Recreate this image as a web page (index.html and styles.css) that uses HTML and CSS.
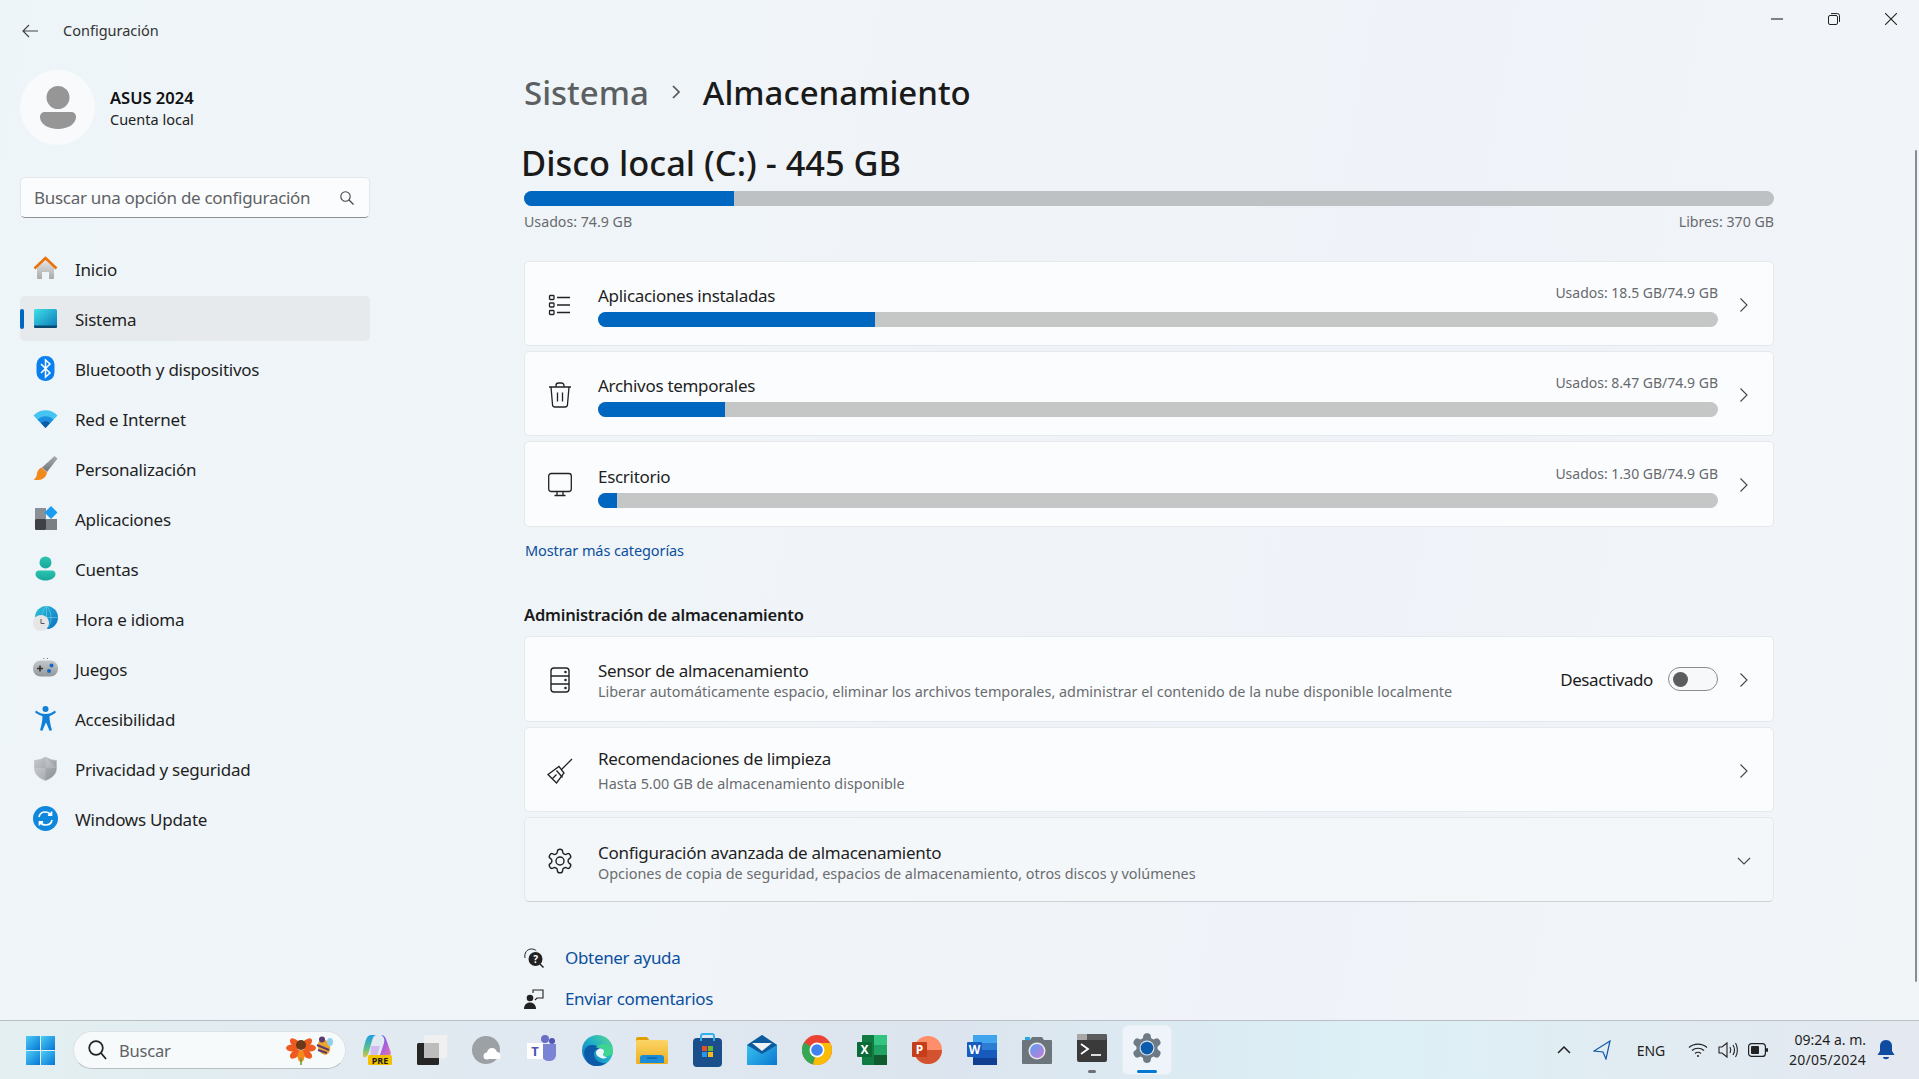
FILE: index.html
```html
<!DOCTYPE html>
<html lang="es">
<head>
<meta charset="UTF-8">
<title>Configuración</title>
<link rel="stylesheet" href="styles.css">
</head>
<body>
<svg class="defs" width="0" height="0">
	<defs>
		<linearGradient id="gHome" x1="0" y1="0" x2="0" y2="1"><stop offset="0" stop-color="#e6e6e6"/><stop offset="1" stop-color="#a9a9a9"/></linearGradient>
		<linearGradient id="gScreen" x1="0" y1="0" x2="1" y2="1"><stop offset="0" stop-color="#3fe0e6"/><stop offset="1" stop-color="#0a78b8"/></linearGradient>
		<linearGradient id="gTeal" x1="0" y1="0" x2="0" y2="1"><stop offset="0" stop-color="#2bc4ae"/><stop offset="1" stop-color="#17a89c"/></linearGradient>
		<linearGradient id="gGlobe" x1="0" y1="0" x2="1" y2="1"><stop offset="0" stop-color="#2fc4d8"/><stop offset="1" stop-color="#0a6ec4"/></linearGradient>
		<linearGradient id="gShield" x1="0" y1="0" x2="1" y2="1"><stop offset="0" stop-color="#c9ccd0"/><stop offset="1" stop-color="#888d92"/></linearGradient>
		<linearGradient id="gPad" x1="0" y1="0" x2="0" y2="1"><stop offset="0" stop-color="#c4c7ca"/><stop offset="1" stop-color="#94989c"/></linearGradient>
		<linearGradient id="gBrush" x1="0" y1="0" x2="0" y2="1"><stop offset="0" stop-color="#a8acb0"/><stop offset="1" stop-color="#70757a"/></linearGradient>
		<linearGradient id="gStart" x1="0" y1="0" x2="1" y2="1"><stop offset="0" stop-color="#4ccdf7"/><stop offset="1" stop-color="#0674d4"/></linearGradient>
		<linearGradient id="gCopL" x1="0" y1="0" x2="0" y2="1"><stop offset="0" stop-color="#1f9de8"/><stop offset=".6" stop-color="#5dc08a"/><stop offset="1" stop-color="#e3c53a"/></linearGradient>
		<linearGradient id="gCopR" x1="0" y1="0" x2="1" y2="1"><stop offset="0" stop-color="#2a6de0"/><stop offset=".55" stop-color="#a65fdc"/><stop offset="1" stop-color="#ee7ab0"/></linearGradient>
		<linearGradient id="gEdge" x1="1" y1="0" x2="0" y2="1"><stop offset="0" stop-color="#5fdc8a"/><stop offset=".45" stop-color="#1fb0c8"/><stop offset="1" stop-color="#0c6cc0"/></linearGradient>
		<linearGradient id="gFolder" x1="0" y1="0" x2="0" y2="1"><stop offset="0" stop-color="#fbd568"/><stop offset="1" stop-color="#efae1c"/></linearGradient>
		<linearGradient id="gMail" x1="0" y1="0" x2="1" y2="1"><stop offset="0" stop-color="#3fd0f8"/><stop offset="1" stop-color="#0b77d0"/></linearGradient>
		<linearGradient id="gCam" x1="0" y1="0" x2="1" y2="1"><stop offset="0" stop-color="#5aa0f0"/><stop offset="1" stop-color="#c878d8"/></linearGradient>
		<path id="cog" d="M12.22 2h-.44a2 2 0 0 0-2 2v.18a2 2 0 0 1-1 1.73l-.43.25a2 2 0 0 1-2 0l-.15-.08a2 2 0 0 0-2.73.73l-.22.38a2 2 0 0 0 .73 2.73l.15.1a2 2 0 0 1 1 1.72v.51a2 2 0 0 1-1 1.74l-.15.09a2 2 0 0 0-.73 2.73l.22.38a2 2 0 0 0 2.73.73l.15-.08a2 2 0 0 1 2 0l.43.25a2 2 0 0 1 1 1.73V20a2 2 0 0 0 2 2h.44a2 2 0 0 0 2-2v-.18a2 2 0 0 1 1-1.73l.43-.25a2 2 0 0 1 2 0l.15.08a2 2 0 0 0 2.73-.73l.22-.39a2 2 0 0 0-.73-2.73l-.15-.08a2 2 0 0 1-1-1.74v-.5a2 2 0 0 1 1-1.74l.15-.09a2 2 0 0 0 .73-2.73l-.22-.38a2 2 0 0 0-2.73-.73l-.15.08a2 2 0 0 1-2 0l-.43-.25a2 2 0 0 1-1-1.73V4a2 2 0 0 0-2-2z"/>
		<path id="chev" d="M1.500 .5L8 7l-6.500 6.500"/>
	</defs>
</svg>

<div class="window">
	<header class="titlebar">
		<svg class="back" width="16" height="14" viewBox="0 0 16 14"><path d="M7 1L1 7l6 6M1 7h15" fill="none" stroke="#444" stroke-width="1.2"/></svg>
		<span class="app-name">Configuración</span>
		<div class="controls">
			<svg width="12" height="12" viewBox="0 0 12 12"><path d="M0 6h12" stroke="#222" stroke-width="1.1"/></svg>
			<svg width="12" height="12" viewBox="0 0 12 12"><rect x=".5" y="2.5" width="9" height="9" rx="1.5" fill="none" stroke="#222"/><path d="M3 .6h6.5a2 2 0 0 1 2 2V9" fill="none" stroke="#222"/></svg>
			<svg width="12" height="12" viewBox="0 0 12 12"><path d="M0 0l12 12M12 0L0 12" stroke="#222" stroke-width="1.1"/></svg>
		</div>
	</header>

	<div class="content">
		<aside class="sidebar">
			<div class="profile">
				<div class="avatar">
					<svg width="36" height="44" viewBox="0 0 36 44"><circle cx="18" cy="11.500" r="11.500" fill="#969696"/><path d="M0 31c0-3 2-5 5-5h26c3 0 5 2 5 5 0 7-8 12-18 12S0 38 0 31z" fill="#969696"/></svg>
				</div>
				<div>
					<div class="profile-name">ASUS 2024</div>
					<div class="profile-sub">Cuenta local</div>
				</div>
			</div>

			<div class="search-box">
				<span>Buscar una opción de configuración</span>
				<svg width="14" height="14" viewBox="0 0 14 14"><circle cx="5.500" cy="5.500" r="4.700" fill="none" stroke="#444" stroke-width="1.100"/><path d="M9 9l4.500 4.500" stroke="#444" stroke-width="1.200"/></svg>
			</div>

			<nav class="nav">
				<a class="nav-item">
					<svg width="25" height="25" viewBox="0 0 25 25"><path d="M4 12L12.500 4 21 12v10a1 1 0 0 1-1 1h-4v-7H9v7H5a1 1 0 0 1-1-1z" fill="url(#gHome)"/><path d="M1.500 12.500L12.500 2l11 10.500" fill="none" stroke="#e8710a" stroke-width="2.600"/></svg>
					Inicio
				</a>
				<a class="nav-item active">
					<svg width="25" height="25" viewBox="0 0 25 25"><rect x="1" y="3" width="23" height="19" rx="1.500" fill="url(#gScreen)"/><path d="M1 19.500h23v1a1.500 1.500 0 0 1-1.500 1.500h-20A1.500 1.500 0 0 1 1 20.500z" fill="#0a4a70"/></svg>
					Sistema
				</a>
				<a class="nav-item">
					<svg width="25" height="25" viewBox="0 0 25 25"><rect x="3.500" y="0" width="18" height="25" rx="8.500" fill="#0a80f0"/><path d="M8 8l9 9-4.500 4V4l4.500 4-9 9" fill="none" stroke="#fff" stroke-width="1.500"/></svg>
					Bluetooth y dispositivos
				</a>
				<a class="nav-item">
					<svg width="25" height="25" viewBox="0 0 25 25"><path d="M.5 9.500C7 2.500 18 2.500 24.500 9.500l-12 12.500z" fill="#45c4f2"/><path d="M4.500 13.500C9 9 16 9 20.500 13.500l-8 8.500z" fill="#1d8fe0"/><path d="M8 17c2.500-2.300 6.500-2.300 9 0l-4.500 5z" fill="#0f5ca6"/></svg>
					Red e Internet
				</a>
				<a class="nav-item">
					<svg width="25" height="25" viewBox="0 0 25 25"><path d="M21.500 0L24.500 2.500 14 16l-5-4.500z" fill="url(#gBrush)"/><path d="M8.500 11.500l5.500 5c-.5 3.500-3 6.500-7 7.300-2 .4-4.500.4-6.500-.3 3-1.500 3-3.500 3.500-6 .5-3 2-5 4.500-6z" fill="#f08a1d"/></svg>
					Personalización
				</a>
				<a class="nav-item">
					<svg width="25" height="25" viewBox="0 0 25 25"><rect x="2" y="2" width="11" height="11" fill="#8b9096"/><rect x="2" y="13" width="11" height="11" rx="1" fill="#3e4246"/><rect x="13" y="13" width="11" height="11" fill="#7a7f84"/><path d="M18 0l6.500 6.500L18 13l-6.500-6.500z" fill="#1a9cf0"/></svg>
					Aplicaciones
				</a>
				<a class="nav-item">
					<svg width="25" height="25" viewBox="0 0 25 25"><circle cx="12.500" cy="6.500" r="6" fill="url(#gTeal)"/><path d="M2.500 18c0-2 1.500-3.500 3.500-3.500h13c2 0 3.500 1.500 3.500 3.500 0 4-5 6.500-10 6.500S2.500 22 2.500 18z" fill="url(#gTeal)"/></svg>
					Cuentas
				</a>
				<a class="nav-item">
					<svg width="25" height="25" viewBox="0 0 25 25"><circle cx="13.500" cy="11.500" r="11.500" fill="url(#gGlobe)"/><path d="M13.500 0v23M2 11.500h23M13.500 0c-6 6-6 17 0 23M13.500 0c6 6 6 17 0 23" fill="none" stroke="#7fd8ee" stroke-width=".5"/><circle cx="8" cy="17" r="8" fill="#e6e6e6"/><path d="M8 13v4.500h3.500" fill="none" stroke="#555" stroke-width="1"/></svg>
					Hora e idioma
				</a>
				<a class="nav-item">
					<svg width="25" height="25" viewBox="0 0 25 25"><rect x="0" y="4.500" width="25" height="16" rx="7.500" fill="url(#gPad)"/><path d="M4 12.500h6M7 9.500v6" stroke="#333" stroke-width="1.600"/><circle cx="18.500" cy="9.500" r="2" fill="#1467c8"/><circle cx="16" cy="15" r="2" fill="#1467c8"/><path d="M10.500 2.500h.8M14 2.500h.8" stroke="#555" stroke-width="1"/></svg>
					Juegos
				</a>
				<a class="nav-item">
					<svg width="25" height="25" viewBox="0 0 25 25"><circle cx="12.500" cy="3" r="3" fill="#0f7fd8"/><path d="M3 4.500c3 2.500 6 3.500 9.500 3.500s6.500-1 9.500-3.500l.9 2c-2.500 2-4.400 3-6.400 3.700 0 4 1 9 2.500 14l-2.500.5c-1.200-3-2.500-6-3.500-8.200-1 2.200-2.300 5.200-3.500 8.200l-2.500-.5c1.500-5 2.500-10 2.500-14C7.500 9.500 4.600 8.500 2.100 6.500z" fill="#0f7fd8"/></svg>
					Accesibilidad
				</a>
				<a class="nav-item">
					<svg width="25" height="25" viewBox="0 0 25 25"><path d="M12.500 1c3 2 7 3.200 11 3.500V12c0 6-4 10-11 12.500C5.500 22 1.500 18 1.500 12V4.500c4-.3 8-1.500 11-3.500z" fill="url(#gShield)" stroke="#b4b8bc" stroke-width=".6"/><path d="M12.500 1v23.500C5.500 22 1.500 18 1.500 12h22" fill="#fff" fill-opacity=".16"/></svg>
					Privacidad y seguridad
				</a>
				<a class="nav-item">
					<svg width="25" height="25" viewBox="0 0 25 25"><circle cx="12.500" cy="12.500" r="12.500" fill="#0f87dc"/><path d="M6 11c.6-3.300 3.300-5 6.300-5 2.300 0 4.200 1 5.400 2.800M18.500 5.500v3.600h-3.600M19 14c-.6 3.300-3.300 5-6.300 5-2.300 0-4.200-1-5.400-2.800M6.500 19.500v-3.600h3.600" fill="none" stroke="#fff" stroke-width="1.700"/></svg>
					Windows Update
				</a>
			</nav>
		</aside>

		<main class="main">
			<div class="breadcrumb">
				<span class="crumb-parent">Sistema</span>
				<svg width="10" height="14" viewBox="0 0 10 14"><path d="M2 1l6 6-6 6" fill="none" stroke="#555" stroke-width="1.700"/></svg>
				<span class="crumb-current">Almacenamiento</span>
			</div>

			<h1 class="disk-title">Disco local (C:) - 445 GB</h1>
			<div class="bar bar-top"><div class="bar-fill" style="width:16.8%"></div></div>
			<div class="bar-labels"><span>Usados: 74.9 GB</span><span>Libres: 370 GB</span></div>

			<div class="cards first-cards">
				<div class="card">
					<svg class="card-icon" width="24" height="24" viewBox="0 0 24 24" fill="none" stroke="#222" stroke-width="1.300"><rect x="1.500" y="2.500" width="4.500" height="4" rx=".8"/><rect x="1.500" y="10" width="4.500" height="4" rx=".8"/><rect x="1.500" y="17.500" width="4.500" height="4" rx=".8"/><path d="M9 4.500h13M9 12h13M9 19.500h13"/></svg>
					<div class="card-body">
						<div class="usage-head"><span class="card-title">Aplicaciones instaladas</span><span class="usage">Usados: 18.5 GB/74.9 GB</span></div>
						<div class="bar"><div class="bar-fill" style="width:24.75%"></div></div>
					</div>
					<div class="card-end"><svg width="10" height="14" viewBox="0 0 10 14" class="chev"><use href="#chev"/></svg></div>
				</div>
				<div class="card">
					<svg class="card-icon" width="24" height="26" viewBox="0 0 24 26" fill="none" stroke="#222" stroke-width="1.300"><path d="M1 5h22M8 5V3.500A2.500 2.500 0 0 1 10.500 1h3A2.500 2.500 0 0 1 16 3.500V5M3 5l1.500 17.500a2.500 2.500 0 0 0 2.500 2.500h10a2.500 2.500 0 0 0 2.500-2.500L21 5M9.500 10.500v9M14.500 10.500v9"/></svg>
					<div class="card-body">
						<div class="usage-head"><span class="card-title">Archivos temporales</span><span class="usage">Usados: 8.47 GB/74.9 GB</span></div>
						<div class="bar"><div class="bar-fill" style="width:11.35%"></div></div>
					</div>
					<div class="card-end"><svg width="10" height="14" viewBox="0 0 10 14" class="chev"><use href="#chev"/></svg></div>
				</div>
				<div class="card last-usage">
					<svg class="card-icon" width="24" height="26" viewBox="0 0 24 26" fill="none" stroke="#222" stroke-width="1.300"><rect x=".7" y="1.500" width="22.600" height="18" rx="2.500"/><path d="M9 19.500v4H6.500h11H15v-4"/></svg>
					<div class="card-body">
						<div class="usage-head"><span class="card-title">Escritorio</span><span class="usage">Usados: 1.30 GB/74.9 GB</span></div>
						<div class="bar"><div class="bar-fill" style="width:1.74%"></div></div>
					</div>
					<div class="card-end"><svg width="10" height="14" viewBox="0 0 10 14" class="chev"><use href="#chev"/></svg></div>
				</div>
			</div>

			<a class="more-link">Mostrar más categorías</a>
			<h2 class="section-title">Administración de almacenamiento</h2>

			<div class="cards">
				<div class="card tall">
					<svg class="card-icon" width="24" height="26" viewBox="0 0 24 26" fill="none" stroke="#222" stroke-width="1.400"><rect x="3" y="1" width="18" height="24" rx="3"/><path d="M3 9h18M3 17h18"/><circle cx="17.500" cy="5" r=".6"/><circle cx="17.500" cy="13" r=".6"/><circle cx="17.500" cy="21" r=".6"/></svg>
					<div class="card-body">
						<div class="card-title">Sensor de almacenamiento</div>
						<div class="card-sub">Liberar automáticamente espacio, eliminar los archivos temporales, administrar el contenido de la nube disponible localmente</div>
					</div>
					<span class="toggle-label">Desactivado</span>
					<div class="toggle"><span class="knob"></span></div>
					<div class="card-end"><svg width="10" height="14" viewBox="0 0 10 14" class="chev"><use href="#chev"/></svg></div>
				</div>
				<div class="card">
					<svg class="card-icon" width="26" height="26" viewBox="0 0 26 26" fill="none" stroke="#222" stroke-width="1.300"><path d="M1 16.500L12 8.500 17 15 9.500 25z"/><path d="M14.500 11.500L25 1M5.500 20.500l4-4" /><path d="M9.500 12.500l6 7"/></svg>
					<div class="card-body">
						<div class="card-title">Recomendaciones de limpieza</div>
						<div class="card-sub sub-gap">Hasta 5.00 GB de almacenamiento disponible</div>
					</div>
					<div class="card-end"><svg width="10" height="14" viewBox="0 0 10 14" class="chev"><use href="#chev"/></svg></div>
				</div>
				<div class="card plain">
					<svg class="card-icon" width="26" height="26" viewBox="1 1 22 22" fill="none" stroke="#222" stroke-width="1.200"><use href="#cog"/><circle cx="12" cy="12" r="3.400"/></svg>
					<div class="card-body">
						<div class="card-title">Configuración avanzada de almacenamiento</div>
						<div class="card-sub">Opciones de copia de seguridad, espacios de almacenamiento, otros discos y volúmenes</div>
					</div>
					<div class="card-end"><svg width="14" height="10" viewBox="0 0 14 10"><path d="M1 2l6 6 6-6" fill="none" stroke="#444" stroke-width="1.100"/></svg></div>
				</div>
			</div>

			<div class="help-links">
				<a class="help-link">
					<svg width="20" height="20" viewBox="0 0 20 20"><path d="M1 10C0 5 3 1 7.500 1c2 0 3.500.6 4.800 1.800" fill="none" stroke="#222" stroke-width="1"/><circle cx="11.500" cy="11" r="7" fill="#222"/><path d="M16 16l3.500 3.500" stroke="#222" stroke-width="1.500"/><text x="11.500" y="14.500" class="help-q">?</text></svg>
					Obtener ayuda
				</a>
				<a class="help-link">
					<svg width="20" height="20" viewBox="0 0 20 20"><circle cx="6" cy="9" r="3.300" fill="#222"/><path d="M0 20c0-4 2.500-6.500 6-6.500s6 2.500 6 6.500z" fill="#222"/><path d="M9 4V1h10v8h-6l-2 2" fill="none" stroke="#222" stroke-width="1.100"/></svg>
					Enviar comentarios
				</a>
			</div>
		</main>
	</div>
	<div class="scrollbar"></div>
</div>

<footer class="taskbar">
	<svg class="start" width="29" height="29" viewBox="0 0 29 29"><rect width="14" height="14" fill="url(#gStart)"/><rect x="15" width="14" height="14" fill="url(#gStart)"/><rect y="15" width="14" height="14" fill="url(#gStart)"/><rect x="15" y="15" width="14" height="14" fill="url(#gStart)"/></svg>

	<div class="tb-search">
		<svg width="19" height="20" viewBox="0 0 19 20"><circle cx="8" cy="8" r="6.800" fill="none" stroke="#222" stroke-width="1.700"/><path d="M13 13l5 6" stroke="#222" stroke-width="1.800"/></svg>
		<span>Buscar</span>
		<svg class="tb-doodle" width="47" height="30" viewBox="0 0 47 30">
			<g fill="#ee5a1f"><ellipse cx="6" cy="12" rx="6" ry="3.500"/><ellipse cx="24" cy="12" rx="6" ry="3.500"/><ellipse cx="9" cy="7" rx="6" ry="3.500" transform="rotate(40 9 7)"/><ellipse cx="21" cy="7" rx="6" ry="3.500" transform="rotate(-40 21 7)"/><ellipse cx="9" cy="18" rx="6" ry="3.500" transform="rotate(-40 9 18)"/><ellipse cx="21" cy="18" rx="6" ry="3.500" transform="rotate(40 21 18)"/><ellipse cx="15" cy="20" rx="3.500" ry="6" fill="#f48a1e"/></g>
			<circle cx="15" cy="9" r="5" fill="#6a3a18"/>
			<path d="M15 22v7" stroke="#6a9a2a" stroke-width="1.500"/>
			<ellipse cx="38" cy="11" rx="6" ry="8" transform="rotate(-20 38 11)" fill="#e9a52c"/>
			<path d="M31 9l12 5M32 14l9 3" stroke="#5a3a70" stroke-width="2"/>
			<circle cx="36" cy="3.500" r="3" fill="#5a3a70"/>
			<ellipse cx="44" cy="6" rx="3" ry="4" fill="#8fd0f0"/>
		</svg>
	</div>

	<div class="tb-apps">
		<div class="tb-app">
			<svg width="30" height="32" viewBox="0 0 30 32"><path d="M9 1h6c-2 0-3.500 1-4.300 3.500L6.500 19c-.8 3-2.500 4.500-5 4.500C.3 19 1.500 14 3.500 7 4.700 3 6.500 1 9 1z" fill="url(#gCopL)"/><path d="M11 1h8c2.500 0 4 1.500 5 4l5 14c-1 3-3 5-6 5h-9c3-1 4-3 5-6l3-9c.8-3 .5-6-3-8z" fill="url(#gCopR)"/><path d="M9 12h9l-2.500 9c-.6 2-2 3-4 3H5c2 0 3-1.500 3.600-3.500z" fill="#c9a6ee" fill-opacity=".7"/><rect x="6" y="21" width="24" height="10" rx="1.500" fill="#f2c200"/><text x="18" y="29.500" class="tb-pre">PRE</text></svg>
		</div>
		<div class="tb-app">
			<svg width="30" height="30" viewBox="0 0 30 30"><rect x="0" y="8" width="22" height="22" rx="1.500" fill="#262626"/><rect x="7" y="0" width="23" height="23" rx="1" fill="#f0f0f0"/><rect x="7" y="8" width="15" height="15" fill="#bdbdbd"/></svg>
		</div>
		<div class="tb-app">
			<svg width="30" height="30" viewBox="0 0 30 30"><circle cx="14" cy="15" r="14" fill="#9ca1a6"/><circle cx="20" cy="18" r="5" fill="#fff"/><circle cx="25" cy="20.500" r="3.500" fill="#fff"/><circle cx="15" cy="21" r="3.500" fill="#fff"/><rect x="15" y="20" width="13" height="4" fill="#fff"/></svg>
		</div>
		<div class="tb-app">
			<svg width="30" height="32" viewBox="0 0 30 32"><circle cx="18" cy="5" r="4" fill="#6a6fc4"/><circle cx="25" cy="7" r="3" fill="#4e55b4"/><path d="M12 10h17v11a6 6 0 0 1-6 6 8 8 0 0 1-8-4h-3z" fill="#7b83d4"/><rect x="0" y="9" width="16" height="16" fill="#fff"/><text x="8" y="22" class="tb-t">T</text></svg>
		</div>
		<div class="tb-app">
			<svg width="31" height="31" viewBox="0 0 31 31"><circle cx="15.500" cy="15.500" r="15.500" fill="url(#gEdge)"/><path d="M4 25C0 17 3 10 10 10c4 0 7 2 8 5-3-1-6 0-6 4 0 5 5 10 12 9-3 2-6 3-9 3-5 0-9-2-11-6z" fill="#0c5aa8"/><path d="M31 17c0-5-4-8-9-8-4 0-7 2-8 4 3-1 7-1 8 2 .5 2-1 3-1 4 0 2 3 3 5 2 3-1 5-2 5-4z" fill="#3fd590"/><path d="M14 18c0-3 2-4.500 4.500-4.500 2 0 3.500 1 3.500 3 0 1.500-1 2-1 3 0 1.500 2 2.500 4 2.500-1 1.500-4 2-6 1-3-1-5-3-5-5z" fill="#eaf6fa"/></svg>
		</div>
		<div class="tb-app">
			<svg width="32" height="28" viewBox="0 0 32 28"><path d="M0 3a2 2 0 0 1 2-2h9l3 4H0z" fill="#e0a000"/><rect x="0" y="4" width="32" height="24" rx="1.500" fill="url(#gFolder)"/><path d="M4 27v-5a3 3 0 0 1 3-3h18a3 3 0 0 1 3 3v5z" fill="#1a8cd8"/><path d="M11 22h10" stroke="#0b5da0" stroke-width="1.200"/></svg>
		</div>
		<div class="tb-app">
			<svg width="29" height="34" viewBox="0 0 29 34"><rect y="5" width="29" height="29" rx="4" fill="#1a4f8c"/><path d="M8 8V3a2 2 0 0 1 2-2h9a2 2 0 0 1 2 2v5" fill="none" stroke="#31b0f0" stroke-width="2"/><rect x="9" y="13" width="5" height="5" fill="#ea4d2a"/><rect x="15" y="13" width="5" height="5" fill="#6cbb2a"/><rect x="9" y="19" width="5" height="5" fill="#2a96e8"/><rect x="15" y="19" width="5" height="5" fill="#f8bb1c"/></svg>
		</div>
		<div class="tb-app">
			<svg width="30" height="30" viewBox="0 0 30 30"><path d="M0 10L15 0l15 10v20H0z" fill="url(#gMail)"/><path d="M0 10L15 0l15 10-15 9z" fill="#0f5a9c"/><path d="M5 8h20l-10 8z" fill="#eef2f5"/></svg>
		</div>
		<div class="tb-app">
			<svg width="30" height="30" viewBox="0 0 30 30"><circle cx="15" cy="15" r="15" fill="#ea4335"/><path d="M15 15L2 7.500A15 15 0 0 0 11 29.500z" fill="#34a853"/><path d="M15 15l-4 14.500A15 15 0 0 0 30 15c0-2.500-.6-4.500-1.700-7H15z" fill="#fbbc05"/><circle cx="15" cy="15" r="7.500" fill="#fff"/><circle cx="15" cy="15" r="5.800" fill="#3f83f0"/></svg>
		</div>
		<div class="tb-app">
			<svg width="30" height="30" viewBox="0 0 30 30"><rect x="5" y="0" width="25" height="30" rx="1" fill="#107c41"/><rect x="17" y="0" width="13" height="10" fill="#33c481"/><rect x="17" y="10" width="13" height="10" fill="#21a366"/><rect x="17" y="20" width="13" height="10" fill="#0e5c2f"/><rect x="0" y="7" width="15" height="15" rx="1" fill="#0b6a37"/><text x="7.500" y="19" class="tb-letter">X</text></svg>
		</div>
		<div class="tb-app">
			<svg width="30" height="30" viewBox="0 0 30 30"><circle cx="16" cy="15" r="14" fill="#ff8f6b"/><path d="M16 15h14a14 14 0 0 1-14 14 14 14 0 0 1-14-14z" fill="#d35230"/><rect x="0" y="7" width="15" height="15" rx="1" fill="#c43e1c"/><text x="7.500" y="19" class="tb-letter">P</text></svg>
		</div>
		<div class="tb-app">
			<svg width="30" height="30" viewBox="0 0 30 30"><rect x="6" y="0" width="24" height="30" rx="1" fill="#2b7cd3"/><rect x="6" y="0" width="24" height="8" fill="#41a5ee"/><rect x="6" y="15" width="24" height="8" fill="#185abd"/><rect x="6" y="23" width="24" height="7" fill="#103f91"/><rect x="0" y="7" width="15" height="15" rx="1" fill="#185abd"/><text x="7.500" y="19" class="tb-letter">W</text></svg>
		</div>
		<div class="tb-app">
			<svg width="30" height="28" viewBox="0 0 30 28"><rect x="3" y="1" width="5" height="4" fill="#2aa8e0"/><path d="M1 4h7l2-3h10l2 3h7a1 1 0 0 1 1 1v22a1 1 0 0 1-1 1H1a1 1 0 0 1-1-1V5a1 1 0 0 1 1-1z" fill="#6c747c"/><circle cx="15" cy="15" r="8.500" fill="#e8e8e8"/><circle cx="15" cy="15" r="7" fill="url(#gCam)"/></svg>
		</div>
		<div class="tb-app has-dot">
			<svg width="30" height="28" viewBox="0 0 30 28"><rect width="30" height="28" rx="2" fill="#3a3a3a"/><rect width="30" height="6" rx="2" fill="#5c5c5c"/><rect width="10" height="6" fill="#a8a8a8"/><path d="M4 10l7 5-7 5" fill="none" stroke="#fff" stroke-width="1.800"/><path d="M14 21h10" stroke="#ddd" stroke-width="2"/></svg>
		</div>
		<div class="tb-app current">
			<svg width="34" height="34" viewBox="0 0 24 24"><use href="#cog" fill="#6e7a84" stroke="#6e7a84"/><circle cx="12" cy="12" r="5.300" fill="#d9e4ee"/><circle cx="12" cy="12" r="4.500" fill="#0b5cad"/></svg>
		</div>
	</div>

	<div class="tray">
		<div class="tray-cell w30"><svg width="14" height="8" viewBox="0 0 14 8"><path d="M1 7l6-6 6 6" fill="none" stroke="#222" stroke-width="1.500"/></svg></div>
		<div class="tray-cell w46"><svg width="18" height="20" viewBox="0 0 18 20"><path d="M17 1L1 11l9 1 3 7z" fill="none" stroke="#0f57a8" stroke-width="1.200"/></svg></div>
		<div class="tray-cell w52 lang">ENG</div>
		<div class="tray-cell w30 wifi"><svg width="20" height="16" viewBox="0 0 20 16" fill="none" stroke="#222" stroke-width="1.200"><path d="M1 5.500c5-4.500 13-4.500 18 0M4 8.500c3.300-3 8.700-3 12 0M7 11.500c1.800-1.500 4.200-1.500 6 0"/><circle cx="10" cy="14" r="1" fill="#222" stroke="none"/></svg></div>
		<div class="tray-cell w30"><svg width="20" height="18" viewBox="0 0 20 18" fill="none" stroke="#222" stroke-width="1.100"><path d="M1 6h3l5-4v14l-5-4H1z"/><path d="M12 6c1 2 1 4 0 6M15 4c1.800 3 1.800 7 0 10M17.500 2c2.500 4 2.500 10 0 14"/></svg></div>
		<div class="tray-cell w30"><svg width="20" height="14" viewBox="0 0 20 14"><rect x=".6" y=".6" width="16.800" height="12.800" rx="3" fill="none" stroke="#222" stroke-width="1.200"/><rect x="3" y="3" width="8" height="8" rx="1" fill="#222"/><rect x="18" y="5" width="2" height="4" rx="1" fill="#222"/></svg></div>
		<div class="clock"><div>09:24 a. m.</div><div class="clock-date">20/05/2024</div></div>
		<svg class="bell" width="18" height="22" viewBox="0 0 18 22"><path d="M9 1c-4 0-6 3-6 6v5l-2.500 4h17L15 12V7c0-3-2-6-6-6z" fill="#0f4ba0"/><path d="M6 18h6c0 3-6 3-6 0z" fill="#0f4ba0"/></svg>
	</div>
</footer>
</body>
</html>
```

FILE: styles.css
```css
* {
	box-sizing: border-box;
}

html, body {
	margin: 0;
	height: 100%;
}

body {
	width: 1919px;
	height: 1079px;
	overflow: hidden;
	display: flex;
	flex-direction: column;
	font-family: "Noto Sans", "Open Sans", sans-serif;
	color: #1b1b1b;
	background: linear-gradient(100deg, #eef5f8 0%, #f0f4f8 45%, #eff3f9 70%, #f2f5f8 100%);
}

.defs {
	position: absolute;
}

.window {
	position: relative;
	height: 1020px;
	display: flex;
	flex-direction: column;
	overflow: hidden;
}

/* title bar */
.titlebar {
	height: 50px;
	display: flex;
	align-items: flex-start;
	padding-left: 22px;
}

.back {
	margin-top: 24px;
}

.app-name {
	margin: 20px 0 0 25px;
	font-size: 14.5px;
	line-height: 21px;
	color: #333;
}

.controls {
	margin-left: auto;
	margin-top: 13px;
	padding-right: 22px;
	display: flex;
	gap: 45px;
}

.content {
	flex: 1;
	display: flex;
}

/* sidebar */
.sidebar {
	width: 524px;
	padding: 20px 0 0 20px;
}

.profile {
	display: flex;
	align-items: center;
	gap: 15px;
	height: 75px;
}

.avatar {
	width: 75px;
	height: 75px;
	border-radius: 50%;
	background: #f9fafb;
	display: flex;
	align-items: center;
	justify-content: center;
}

.profile-name {
	font-size: 16.5px;
	font-weight: 600;
	line-height: 23px;
	color: #111;
}

.profile-sub {
	font-size: 14.5px;
	line-height: 20px;
	color: #222;
}

.search-box {
	width: 350px;
	height: 41px;
	margin-top: 32px;
	padding: 0 15px 0 13px;
	display: flex;
	align-items: center;
	justify-content: space-between;
	background: #fbfcfd;
	border: 1px solid #e4e7e9;
	border-bottom: 1px solid #8d8f91;
	border-radius: 5px;
	font-size: 17px;
	letter-spacing: -.3px;
	color: #5f6265;
}

.nav {
	margin-top: 28px;
	width: 350px;
	display: flex;
	flex-direction: column;
	gap: 5px;
}

.nav-item {
	position: relative;
	height: 45px;
	display: flex;
	align-items: center;
	gap: 17px;
	padding: 2px 0 0 13px;
	font-size: 17px;
	letter-spacing: -.25px;
	border-radius: 5px;
	color: #1f1f1f;
}

.nav-item svg {
	margin-top: -2px;
}

.nav-item.active {
	background: #e7eaed;
}

.nav-item.active::before {
	content: "";
	position: absolute;
	left: 0;
	top: 13px;
	width: 4px;
	height: 20px;
	border-radius: 2px;
	background: #0067c0;
}

/* main column */
.main {
	width: 1250px;
	padding-top: 19px;
}

.breadcrumb {
	height: 46px;
	display: flex;
	align-items: center;
	gap: 22px;
	font-size: 33px;
	font-weight: 500;
}

.crumb-parent {
	color: #5c5f62;
}

.crumb-current {
	color: #1a1a1a;
}

.disk-title {
	margin: 25px 0 0 -3px;
	height: 46px;
	font-size: 34.4px;
	line-height: 46px;
	font-weight: 500;
	color: #1a1a1a;
}

.bar {
	height: 15px;
	border-radius: 8px;
	background: #c5c7c7;
	overflow: hidden;
}

.bar-top {
	margin-top: 5px;
	background: #bdc1c4;
}

.bar-fill {
	height: 100%;
	background: #0067c0;
}

.bar-labels {
	margin-top: 6px;
	display: flex;
	justify-content: space-between;
	font-size: 14.2px;
	line-height: 19px;
	color: #686b6e;
}

.cards {
	display: flex;
	flex-direction: column;
	gap: 5px;
}

.first-cards {
	margin-top: 30px;
}

.card {
	height: 85px;
	display: flex;
	align-items: center;
	padding-left: 22px;
	background: #fbfcfe;
	border: 1px solid #e6e9ec;
	border-radius: 5px;
}

.card.tall {
	height: 86px;
}

.card.tall .card-body {
	padding-top: 2px;
}

.card.last-usage {
	height: 86px;
}

.card.plain {
	background: #f4f7fa;
	border-bottom-color: #cdd1d5;
}

.card.plain .card-body {
	padding-top: 4px;
}

.card-icon {
	width: 26px;
	margin: 2px 25px 0 0;
	flex: none;
}

.card-body {
	flex: 1;
	min-width: 0;
}

.usage-head {
	display: flex;
	justify-content: space-between;
	align-items: flex-start;
	margin: 4px 0;
}

.card-title {
	font-size: 17px;
	line-height: 24px;
	letter-spacing: -.3px;
	color: #1f1f1f;
}

.usage {
	margin-top: -1px;
	font-size: 14px;
	line-height: 19px;
	color: #666a6d;
}

.card-sub {
	font-size: 14.4px;
	line-height: 18px;
	color: #696c6f;
}

.sub-gap {
	margin-top: 4px;
}

.card-end {
	width: 55px;
	flex: none;
	margin-top: 2px;
	padding-right: 3px;
	display: flex;
	justify-content: center;
}

.chev {
	fill: none;
	stroke: #444;
	stroke-width: 1.100;
}

.toggle-label {
	font-size: 17px;
	letter-spacing: -.4px;
	margin-right: 15px;
}

.toggle {
	width: 50px;
	height: 24px;
	padding-left: 4px;
	display: flex;
	align-items: center;
	border: 1.5px solid #8a8c8e;
	border-radius: 12px;
	background: #f7f8f9;
}

.knob {
	width: 15px;
	height: 15px;
	border-radius: 50%;
	background: #5c5c5c;
}

.more-link {
	display: block;
	margin-top: 13px;
	padding-left: 1px;
	font-size: 14.5px;
	line-height: 20px;
	letter-spacing: -.1px;
	color: #0b4f9e;
}

.section-title {
	margin: 44px 0 10px;
	font-size: 16.5px;
	line-height: 22px;
	letter-spacing: -.2px;
	font-weight: 600;
	color: #1a1a1a;
}

.help-links {
	margin-top: 44px;
	display: flex;
	flex-direction: column;
	gap: 18px;
}

.help-link {
	height: 23px;
	display: flex;
	align-items: center;
	gap: 21px;
	font-size: 17px;
	letter-spacing: -.33px;
	color: #0b4f9e;
}

.help-q {
	font-size: 10px;
	font-weight: 700;
	fill: #fff;
	text-anchor: middle;
}

.scrollbar {
	position: absolute;
	right: 2px;
	top: 150px;
	width: 2px;
	height: 832px;
	border-radius: 1px;
	background: #8a8c8e;
}

/* taskbar */
.taskbar {
	height: 59px;
	display: flex;
	align-items: center;
	padding-left: 26px;
	border-top: 1px solid #b9bfc4;
	background: linear-gradient(90deg, #e3eff1 0%, #e0e8f1 30%, #dce4ee 48%, #dcf0f6 72%, #e1ecf2 85%, #e4e8f1 100%);
}

.start {
	flex: none;
	margin-right: 18px;
}

.tb-search {
	position: relative;
	width: 273px;
	height: 38px;
	margin-right: 7px;
	padding-left: 14px;
	display: flex;
	align-items: center;
	gap: 12px;
	flex: none;
	background: #f6fafb;
	border: 1px solid #dbe1e4;
	border-bottom-color: #b9c0c4;
	border-radius: 19px;
	font-size: 16.5px;
	letter-spacing: -.2px;
	color: #5e6265;
}

.tb-doodle {
	position: absolute;
	right: 12px;
	top: 4px;
}

.tb-apps {
	display: flex;
	gap: 7px;
}

.tb-app {
	position: relative;
	width: 48px;
	height: 48px;
	display: flex;
	align-items: center;
	justify-content: center;
}

.tb-app.current {
	background: #eef4f9;
	border-radius: 5px;
	box-shadow: 0 0 0 1px #e6edf3;
}

.tb-app.current > svg {
	margin-top: -4px;
}

.tb-app.current::after {
	content: "";
	position: absolute;
	left: 14px;
	bottom: 1px;
	width: 20px;
	height: 3px;
	border-radius: 2px;
	background: #0078d4;
}

.tb-app.has-dot > svg {
	margin-top: -4px;
}

.tb-app.has-dot::after {
	content: "";
	position: absolute;
	left: 20px;
	bottom: 1px;
	width: 8px;
	height: 3px;
	border-radius: 2px;
	background: #6d7175;
}

.tb-pre {
	font-size: 9px;
	font-weight: 700;
	fill: #1b1b1b;
	text-anchor: middle;
}

.tb-t {
	font-size: 13px;
	font-weight: 700;
	fill: #4e55b4;
	text-anchor: middle;
}

.tb-letter {
	font-size: 12px;
	font-weight: 700;
	fill: #fff;
	text-anchor: middle;
}

.tray {
	margin-left: auto;
	padding-right: 21px;
	display: flex;
	align-items: center;
	color: #1f1f1f;
}

.tray-cell {
	display: flex;
	align-items: center;
	justify-content: center;
}

.w30 {
	width: 30px;
}

.w46 {
	width: 46px;
}

.w52 {
	width: 52px;
}

.lang {
	font-size: 14px;
}

.wifi {
	margin-left: 6px;
}

.clock {
	width: 93px;
	text-align: right;
	font-size: 14px;
	line-height: 20px;
}

.clock-date {
	letter-spacing: .25px;
}

.bell {
	margin-left: 11px;
	margin-right: 3px;
}
```
